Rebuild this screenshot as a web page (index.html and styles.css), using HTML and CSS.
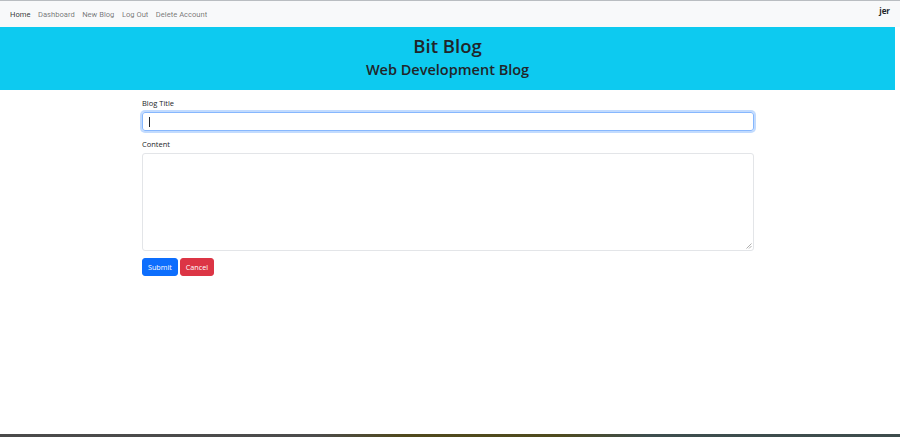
FILE: index.html
```html
<!DOCTYPE html>
<html>
<head>
<meta charset="utf-8">
<link rel="stylesheet" href="styles.css">
</head>
<body>
<div class="page">
  <nav class="navbar">
    <ul class="nav-links">
      <li><a class="nav-link active" href="#">Home</a></li>
      <li><a class="nav-link" href="#">Dashboard</a></li>
      <li><a class="nav-link" href="#">New Blog</a></li>
      <li><a class="nav-link" href="#">Log Out</a></li>
      <li><a class="nav-link" href="#">Delete Account</a></li>
    </ul>
    <span class="user">jer</span>
  </nav>
  <header class="hero">
    <h1 class="hero-title">Bit Blog</h1>
    <h2 class="hero-sub">Web Development Blog</h2>
  </header>
  <main class="container">
    <form class="blog-form">
      <label class="form-label" for="title">Blog Title</label>
      <div class="input focused"><span class="caret"></span></div>
      <label class="form-label" for="content">Content</label>
      <div class="textarea"><svg class="grip" width="6" height="6" viewBox="0 0 6 6"><path d="M5.5 0.5 L0.5 5.5 M5.5 3 L3 5.5" stroke="#9a9a9a" stroke-width="0.8"/></svg></div>
      <div class="buttons">
        <button type="button" class="btn btn-primary">Submit</button>
        <button type="button" class="btn btn-danger">Cancel</button>
      </div>
    </form>
  </main>
</div>
<div class="taskbar"></div>
</body>
</html>
```
FILE: styles.css
```css
html, body {
  margin: 0;
  padding: 0;
  height: 100%;
  background: #fff;
  overflow: hidden;
}
body {
  display: flex;
  flex-direction: column;
  font-family: "Open Sans", "Noto Sans", sans-serif;
  color: #212529;
}
.page {
  flex: 1;
  width: 896px;
}
.navbar {
  width: 900px;
  height: 26px;
  border-top: 1px solid #b9bdc1;
  background: #f8f9fa;
  display: flex;
  align-items: center;
  justify-content: space-between;
  box-sizing: content-box;
}
.nav-links {
  list-style: none;
  margin: 0;
  padding: 0 0 0 10px;
  display: flex;
  gap: 7.5px;
}
.nav-link {
  font-family: Roboto, sans-serif;
  font-size: 7.6px;
  color: rgba(0,0,0,0.55);
  text-decoration: none;
  line-height: 12px;
  display: block;
  margin-top: 1px;
}
.nav-link.active {
  color: rgba(0,0,0,0.8);
}
.user {
  font-family: "Open Sans", sans-serif;
  font-weight: 700;
  font-size: 8px;
  color: #212529;
  margin-right: 10px;
  align-self: flex-start;
  margin-top: 4px;
}
.hero {
  width: 895px;
  height: 63px;
  background: #0dcaf0;
  display: flex;
  flex-direction: column;
  align-items: center;
  justify-content: center;
  text-align: center;
}
.hero-title {
  margin: 0;
  font-family: "Open Sans", sans-serif;
  font-weight: 600;
  font-size: 18.5px;
  line-height: 24px;
  margin-top: -2px;
}
.hero-sub {
  margin: 0;
  font-family: "Open Sans", sans-serif;
  font-weight: 600;
  font-size: 14.5px;
  line-height: 22px;
  margin-top: 1px;
}
.container {
  width: 612px;
  margin: 0 auto;
  padding-top: 8px;
}
.blog-form {
  display: flex;
  flex-direction: column;
}
.form-label {
  font-size: 7.5px;
  line-height: 10px;
  margin-bottom: 4px;
  color: #212529;
}
.input {
  height: 19px;
  box-sizing: border-box;
  border: 1px solid #86b7fe;
  border-radius: 3px;
  box-shadow: 0 0 0 2px rgba(13,110,253,0.25);
  margin-bottom: 8px;
  display: flex;
  align-items: center;
  padding-left: 6px;
}
.caret {
  width: 1px;
  height: 10px;
  background: #212529;
}
.textarea {
  height: 98px;
  box-sizing: border-box;
  border: 1px solid #e3e5e8;
  border-radius: 3px;
  margin-bottom: 7px;
  display: flex;
  align-items: flex-end;
  justify-content: flex-end;
  padding: 1px;
}
.grip { display: block; }
.buttons {
  display: flex;
  gap: 2px;
}
.btn {
  font-family: "Open Sans", sans-serif;
  font-size: 7.2px;
  height: 18px;
  padding: 0 5px;
  border: 1px solid transparent;
  border-radius: 3px;
  color: #fff;
  cursor: pointer;
}
.btn-primary { background: #0d6efd; border-color: #0d6efd; }
.btn-danger { background: #dc3545; border-color: #dc3545; }
.taskbar {
  height: 3px;
  background: linear-gradient(90deg, #4a4a4a 0%, #4c4c4c 35%, #50491c 45%, #4f4b1e 62%, #3e4e4e 72%, #3d4c4c 100%);
}
```
